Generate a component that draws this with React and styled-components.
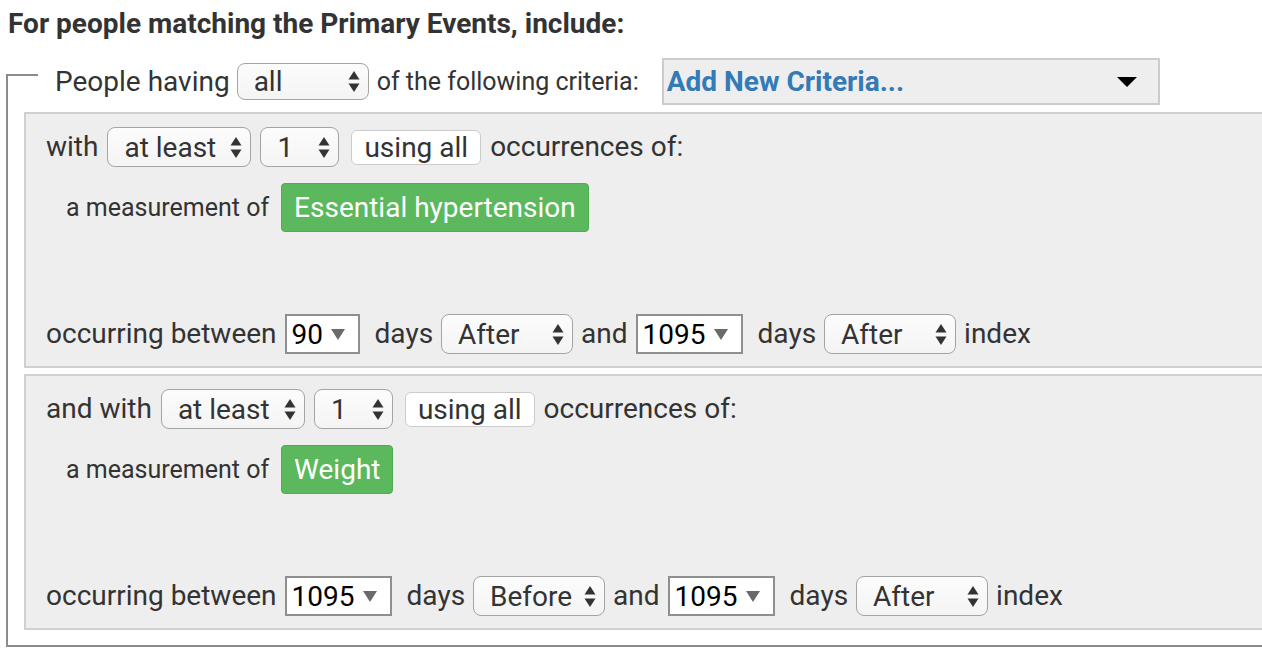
import React from 'react';
import styled, { createGlobalStyle } from 'styled-components';

const GlobalStyle = createGlobalStyle`
  html, body {
    margin: 0;
    padding: 0;
    background: #fff;
    overflow: hidden;
  }
  body {
    font-family: Roboto, 'Liberation Sans', sans-serif;
    color: #333;
  }
`;

const Page = styled.div`
  width: 1262px;
  height: 658px;
  overflow: hidden;
  padding: 8px 0 0 6px;
  box-sizing: border-box;
`;

const Title = styled.div`
  font-weight: 700;
  font-size: 28px;
  line-height: 32px;
  margin-left: 2px;
  color: #333;
  white-space: nowrap;
`;

/* the include box: only left and bottom rules are visible, the top rule is a short corner */
const Fieldset = styled.div`
  display: flow-root;
  width: 1300px;
  margin-top: 34px;
  padding: 0 0 15px 16px;
  border-left: 2px solid #8c8c8c;
  border-bottom: 2px solid #8c8c8c;
`;

const LegendRow = styled.div`
  display: flex;
  align-items: center;
  margin: -16px 0 0 -18px;
  height: 47px;
`;

const Corner = styled.div`
  align-self: flex-start;
  width: 32px;
  margin-top: 16px;
  border-top: 2px solid #8c8c8c;
  margin-right: 17px;
`;

const Text = styled.span`
  font-size: ${p => p.$size || 28}px;
  line-height: 1;
  white-space: nowrap;
  color: #333;
`;

const AddNew = styled.div`
  display: flex;
  align-items: center;
  justify-content: space-between;
  width: 498px;
  height: 47px;
  box-sizing: border-box;
  padding: 0 21px 0 3px;
  background: #eee;
  border: 2px solid #ccc;
  color: #337ab7;
  font-weight: 700;
  font-size: 28px;
  white-space: nowrap;
`;

const Caret = styled.span`
  width: 0;
  height: 0;
  border-left: ${p => p.$w / 2}px solid transparent;
  border-right: ${p => p.$w / 2}px solid transparent;
  border-top: ${p => p.$h}px solid ${p => p.$color};
`;

const Group = styled.div`
  background: #eee;
  border: 2px solid #d0d0d0;
  border-right: none;
  padding: 13px 0 12px 20px;
  margin-top: ${p => (p.$first ? 7 : 6)}px;
  display: flex;
  flex-direction: column;
`;

const Row = styled.div`
  display: flex;
  align-items: center;
  gap: ${p => p.$gap || 8}px;
  padding-left: ${p => p.$indent || 0}px;
  margin-top: ${p => p.$mt || 0}px;
`;

const Spacer = styled.div`
  height: 82px;
`;

const SelectBox = styled.div`
  display: flex;
  align-items: center;
  justify-content: space-between;
  box-sizing: border-box;
  min-width: ${p => p.$w || 132}px;
  height: ${p => p.$h || 40}px;
  padding: 0 8px 0 16px;
  gap: 10px;
  border: 1.5px solid #a4a4a4;
  border-radius: 8px;
  background: linear-gradient(#fcfcfc, #f4f4f4);
  font-size: 28px;
  color: #333;
  white-space: nowrap;
`;

const PlainButton = styled.div`
  display: flex;
  align-items: center;
  box-sizing: border-box;
  height: 35px;
  padding: 0 12px;
  margin-left: 3px;
  background: #fff;
  border: 1px solid #ccc;
  border-radius: 6px;
  font-size: 28px;
  color: #333;
  white-space: nowrap;
`;

const NumberBox = styled.div`
  display: flex;
  align-items: center;
  gap: 8px;
  box-sizing: border-box;
  width: ${p => p.$w}px;
  height: 40px;
  padding: 0 0 0 5px;
  background: #fff;
  border: 2px solid #8f8f8f;
  font-size: 28px;
  color: #000;
  margin-right: 7px;
`;

const ConceptButton = styled.div`
  display: flex;
  align-items: center;
  box-sizing: border-box;
  height: 49px;
  padding: 0 12px;
  margin-left: 2px;
  background: #5cb85c;
  border: 1px solid #4cae4c;
  border-radius: 4px;
  color: #fff;
  font-size: 28px;
  white-space: nowrap;
`;

const UpDown = () => (
  <svg width="12" height="23" viewBox="0 0 12 23">
    <path d="M6 1 L11.5 9.5 L0.5 9.5 Z" fill="#333" />
    <path d="M6 22 L11.5 13.5 L0.5 13.5 Z" fill="#333" />
  </svg>
);

const Select = ({ value, w, h }) => (
  <SelectBox $w={w} $h={h}>
    <span>{value}</span>
    <UpDown />
  </SelectBox>
);

const NumberInput = ({ value, w }) => (
  <NumberBox $w={w}>
    <span>{value}</span>
    <Caret $w={15} $h={11} $color="#6a6a6a" />
  </NumberBox>
);

const CriteriaGroup = ({ lead, concept, from, fromDir, to, toDir, first }) => (
  <Group $first={first}>
    <Row $gap={9}>
      <Text>{lead}</Text>
      <Select value="at least" w={144} />
      <Select value="1" w={79} />
      <PlainButton>using all</PlainButton>
      <Text>occurrences of:</Text>
    </Row>
    <Row $indent={20} $mt={16} $gap={10}>
      <Text $size={25}>a measurement of</Text>
      <ConceptButton>{concept}</ConceptButton>
    </Row>
    <Spacer />
    <Row>
      <Text>occurring between</Text>
      <NumberInput value={from} w={from.length > 2 ? 107 : 75} />
      <Text>days</Text>
      <Select value={fromDir} />
      <Text>and</Text>
      <NumberInput value={to} w={107} />
      <Text>days</Text>
      <Select value={toDir} />
      <Text>index</Text>
    </Row>
  </Group>
);

export default function App() {
  return (
    <>
      <GlobalStyle />
      <Page>
        <Title>For people matching the Primary Events, include:</Title>
        <Fieldset>
          <LegendRow>
            <Corner />
            <Text>People having</Text>
            <Row $gap={8} style={{ marginLeft: 7 }}>
              <Select value="all" h={37} />
              <Text $size={25}>of the following criteria:</Text>
            </Row>
            <AddNew style={{ marginLeft: 23 }}>
              <span>Add New Criteria...</span>
              <Caret $w={20} $h={10} $color="#000" />
            </AddNew>
          </LegendRow>
          <CriteriaGroup
            first
            lead="with"
            concept="Essential hypertension"
            from="90"
            fromDir="After"
            to="1095"
            toDir="After"
          />
          <CriteriaGroup
            lead="and with"
            concept="Weight"
            from="1095"
            fromDir="Before"
            to="1095"
            toDir="After"
          />
        </Fieldset>
      </Page>
    </>
  );
}
